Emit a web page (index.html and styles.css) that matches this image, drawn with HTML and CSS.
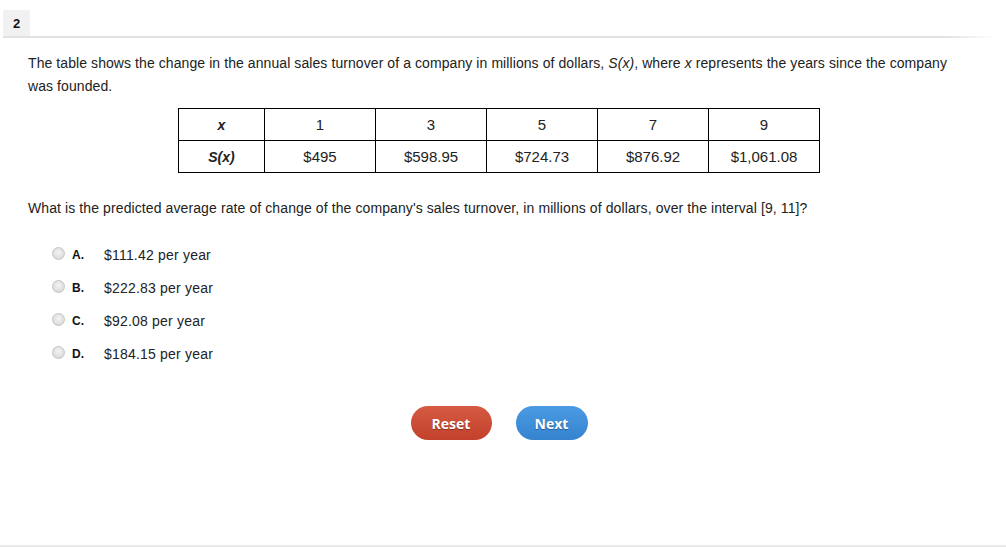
FILE: index.html
```html
<!DOCTYPE html>
<html>
<head>
<meta charset="utf-8">
<link rel="stylesheet" href="styles.css">
</head>
<body>
<div class="page">
  <div class="header">
    <div class="qnum">2</div>
  </div>
  <div class="content">
    <p class="intro">The table shows the change in the annual sales turnover of a company in millions of dollars, <i>S(x)</i>, where <i>x</i> represents the years since the company was founded.</p>
    <table class="data">
      <tr><th><i>x</i></th><td>1</td><td>3</td><td>5</td><td>7</td><td>9</td></tr>
      <tr><th><i>S(x)</i></th><td>$495</td><td>$598.95</td><td>$724.73</td><td>$876.92</td><td>$1,061.08</td></tr>
    </table>
    <p class="question">What is the predicted average rate of change of the company's sales turnover, in millions of dollars, over the interval [9, 11]?</p>
    <ul class="options">
      <li><span class="radio"></span><span class="letter">A.</span><span class="ans">$111.42 per year</span></li>
      <li><span class="radio"></span><span class="letter">B.</span><span class="ans">$222.83 per year</span></li>
      <li><span class="radio"></span><span class="letter">C.</span><span class="ans">$92.08 per year</span></li>
      <li><span class="radio"></span><span class="letter">D.</span><span class="ans">$184.15 per year</span></li>
    </ul>
    <div class="buttons">
      <button class="btn reset">Reset</button>
      <button class="btn next">Next</button>
    </div>
  </div>
  <div class="footer"></div>
</div>
</body>
</html>
```

FILE: styles.css
```css
html, body {
  margin: 0;
  padding: 0;
  background: #fff;
}
body {
  font-family: "Liberation Sans", Arial, sans-serif;
  font-size: 14px;
  color: #222;
}
.page {
  width: 1006px;
  height: 547px;
  display: flex;
  flex-direction: column;
}
.header {
  margin: 10px 11px 0 3px;
  height: 26px;
  border-bottom: 2px solid #e6e6e6;
  border-image: linear-gradient(to right, #e2e2e2 0, #e2e2e2 95%, #ffffff 100%) 1;
  display: flex;
}
.qnum {
  width: 27px;
  height: 26px;
  background: #f1f1f1;
  font-weight: bold;
  font-size: 13px;
  color: #111;
  display: flex;
  align-items: center;
  padding-left: 10px;
  box-sizing: border-box;
}
.content {
  padding: 0 0 0 28px;
  flex: 1;
}
.intro {
  margin: 14px 0 0 0;
  width: 930px;
  line-height: 23px;
  letter-spacing: 0.08px;
}
.data {
  border-collapse: collapse;
  margin: 10px 0 0 150px;
  font-size: 15px;
}
.data th, .data td {
  border: 1px solid #000;
  height: 31px;
  padding: 0;
  text-align: center;
  vertical-align: middle;
}
.data th {
  width: 85px;
  font-weight: bold;
  font-size: 14px;
}
.data td {
  width: 110px;
}
.question {
  margin: 25px 0 0 0;
  line-height: 20px;
  letter-spacing: 0.1px;
}
.options {
  list-style: none;
  margin: 20px 0 0 24px;
  padding: 0;
}
.options li {
  display: flex;
  align-items: center;
  height: 33px;
}
.radio {
  width: 11px;
  height: 11px;
  border-radius: 50%;
  border: 1px solid #c4c4c4;
  background: radial-gradient(circle at 50% 40%, #f4f4f4 0, #dcdcdc 70%, #cfcfcf 100%);
  margin-right: 7px;
  margin-top: -2px;
}
.letter {
  font-weight: bold;
  font-size: 12px;
  width: 32px;
  color: #111;
}
.ans {
  font-size: 14px;
  letter-spacing: 0.2px;
}
.buttons {
  display: flex;
  justify-content: center;
  gap: 24px;
  margin: 36px 0 0 -36px;
}
.btn {
  height: 34px;
  border: none;
  border-radius: 17px;
  color: #fff;
  font-family: "Open Sans", "DejaVu Sans", sans-serif;
  font-weight: bold;
  font-size: 14px;
  text-shadow: 0 1px 1px rgba(0,0,0,0.35);
  padding: 0;
  cursor: pointer;
}
.reset {
  width: 81px;
  background: linear-gradient(#d55a42, #c2412c);
}
.next {
  width: 72px;
  background: linear-gradient(#4a9be3, #3583cf);
}
.footer {
  height: 2px;
  background: #e8e8e8;
}
```
